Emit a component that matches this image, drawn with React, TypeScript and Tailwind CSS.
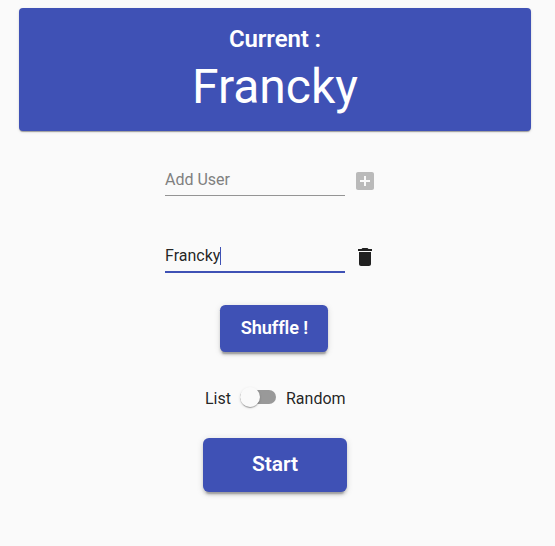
export default function App() {
  return (
    <main className="flex h-[546px] w-[555px] flex-col overflow-hidden bg-[#fafafa] font-[Roboto,'Liberation_Sans',sans-serif] text-black/87">
      <header className="mt-2 ml-[19px] flex h-[123px] w-[512px] flex-col items-center rounded-[4px] bg-[#3f51b5] pt-[15px] text-white shadow-[0_2px_1px_-1px_rgba(0,0,0,.2),0_1px_1px_0_rgba(0,0,0,.14),0_1px_3px_0_rgba(0,0,0,.12)]">
        <h2 className="h-8 text-[24px] leading-8 font-semibold tracking-[-0.1px]">Current :</h2>
        <h1 className="text-[48px] leading-[64px] font-normal">Francky</h1>
      </header>

      <div className="mt-[39px] ml-[165px] flex h-[26px] items-start">
        <div className="h-[26px] w-[180px] border-b border-[#949494] text-base leading-[19px] text-[#808080]">
          Add User
        </div>
        <button aria-label="Add user" className="-mt-[1px] ml-2 size-6 text-[#bababa]">
          <svg viewBox="0 0 24 24" className="size-6" fill="currentColor">
            <path d="M19 3H5c-1.11 0-2 .9-2 2v14c0 1.1.89 2 2 2h14c1.1 0 2-.9 2-2V5c0-1.1-.9-2-2-2zm-2 10h-4v4h-2v-4H7v-2h4V7h2v4h4v2z" />
          </svg>
        </button>
      </div>

      <div className="mt-[50px] ml-[165px] flex h-[27px] items-start">
        <div className="flex h-[27px] w-[180px] items-start border-b-2 border-[#3f51b5] text-base leading-[19px]">
          <span>Francky</span>
          <span className="mt-px h-[18px] w-px bg-[#3f51b5]" />
        </div>
        <button aria-label="Delete user" className="-mt-[1px] ml-2 size-6 text-[#212121]">
          <svg viewBox="0 0 24 24" className="size-6" fill="currentColor">
            <path d="M6 19c0 1.1.9 2 2 2h8c1.1 0 2-.9 2-2V7H6v12zM19 4h-3.500l-1-1h-5l-1 1H5v2h14V4z" />
          </svg>
        </button>
      </div>

      <button className="mt-[32.400px] ml-[220.400px] flex h-[47px] w-[108px] shrink-0 items-center justify-center rounded-[5.200px] bg-[#3f51b5] pb-[2px] text-[18.200px] font-semibold tracking-[-0.1px] text-white shadow-[0_4px_1.300px_-2.600px_rgba(0,0,0,.2),0_2.600px_2.600px_0_rgba(0,0,0,.14),0_1.300px_6.500px_0_rgba(0,0,0,.12)]">
        Shuffle !
      </button>

      <div className="mt-[32.600px] ml-[205px] flex h-6 items-center text-base leading-6">
        <span className="w-[35px] pt-1">List</span>
        <span className="flex h-[14px] w-9 items-center rounded-full bg-[#999]">
          <span className="size-5 shrink-0 rounded-full bg-[#fafafa] shadow-[0_2px_1px_-1px_rgba(0,0,0,.2),0_1px_1px_0_rgba(0,0,0,.14),0_1px_3px_0_rgba(0,0,0,.12)]" />
        </span>
        <span className="ml-[10px] pt-1">Random</span>
      </div>

      <button className="mt-[29px] ml-[203px] flex h-[54px] w-36 shrink-0 items-center justify-center rounded-[6px] bg-[#3f51b5] text-[21px] font-semibold tracking-[-0.1px] text-white shadow-[0_4.500px_1.500px_-3px_rgba(0,0,0,.2),0_3px_3px_0_rgba(0,0,0,.14),0_1.500px_7.500px_0_rgba(0,0,0,.12)]">
        Start
      </button>
    </main>
  );
}
